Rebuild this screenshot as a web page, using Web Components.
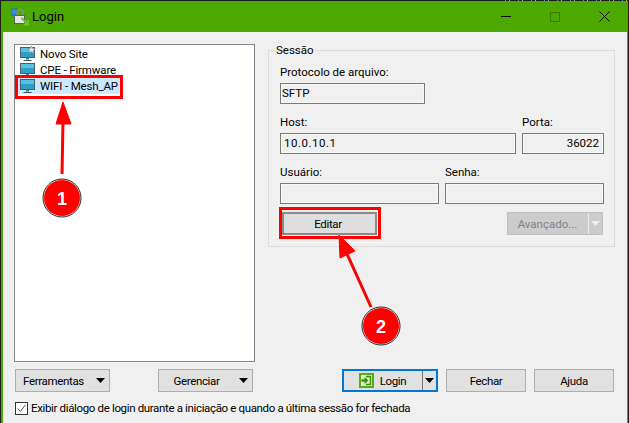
<!DOCTYPE html>
<html>
<head>
<meta charset="utf-8">
<title>Login</title>
<style>
  html, body { margin: 0; padding: 0; background: #1d1d1d; }
  body {
    width: 629px; height: 423px; overflow: hidden;
    font: 12px Roboto, sans-serif; color: #000;
    background: repeating-linear-gradient(90deg, #1d1d1d 0 5px, #4a8fd0 5px 6px, #1d1d1d 6px 9px, #c9a07a 9px 10px, #1d1d1d 10px 13px) 500px 0 / 129px 1px no-repeat #1d1d1d;
  }
</style>
</head>
<body>
<login-window>
  <session-list slot="list">
    <site-item kind="new">Novo Site</site-item>
    <site-item>CPE - Firmware</site-item>
    <site-item selected>WIFI - Mesh_AP</site-item>
  </session-list>
  <session-group slot="session"></session-group>
  <win-button slot="left" width="95" menu>Ferramentas</win-button>
  <win-button slot="left" width="95" menu>Gerenciar</win-button>
  <win-button slot="right" width="96" split primary icon>Login</win-button>
  <win-button slot="right" width="80">Fechar</win-button>
  <win-button slot="right" width="80">Ajuda</win-button>
</login-window>

<script>
const FONT = `font-family: Roboto, sans-serif; font-size: 11.5px; letter-spacing: -.35px;`;

class WinButton extends HTMLElement {
  constructor() {
    super();
    const w = this.getAttribute('width') || 80;
    const menu = this.getAttribute('menu');
    const split = this.hasAttribute('split');
    const icon = this.hasAttribute('icon');
    const arrow = `<svg class="arrow" width="9" height="5" viewBox="0 0 9 5"><path d="M0 0h9L4.5 5z" fill="currentColor"/></svg>`;
    this.attachShadow({mode: 'open'});
    this.shadowRoot.innerHTML = `
      <style>
        :host {
          display: flex;
          box-sizing: border-box;
          width: ${w}px;
          height: 23px;
          align-items: center;
          justify-content: center;
          background: #e1e1e1;
          border: 1px solid #adadad;
          color: #000;
          ${FONT}
        }
        :host([primary]) { border: 2px solid #0078d7; }
        :host([disabled]) { background: #cccccc; border-color: #bfbfbf; color: #838383; letter-spacing: 0; }
        :host([strong]) { border: 2px solid #8a8a8a; background: #dedede; padding-right: 3px; }
        .label { flex: 1; text-align: center; white-space: nowrap; }
        :host([menu]) .label { padding-right: 5px; }
        .row { display: flex; align-items: center; gap: 6px; flex: 1; justify-content: center; }
        .sep { width: 1px; align-self: stretch; background: #777; margin-left: 1px; }
        .drop { width: 13px; display: flex; justify-content: center; }
        .arrow { display: block; flex: none; }
        :host([menu]) .arrow { margin: 0 4px 0 0; }
        :host([disabled]) .drop { color: #eeeeee; }
        :host([disabled]) .sep { background: #eeeeee; }
      </style>
      ${icon ? `<div class="row">
        <svg width="15" height="15" viewBox="0 0 15 15"><rect width="15" height="15" fill="#58ad12"/><rect x="2" y="2" width="11" height="11" fill="#d8efc4"/><path d="M7 3.5h4.5v8H7" fill="none" stroke="#3c8f06" stroke-width="1.4"/><path d="M2.5 6.3h3.2V4l3.6 3.5-3.6 3.5V8.700H2.500z" fill="#3c8f06"/></svg>
        <slot></slot></div>` : `<span class="label"><slot></slot></span>`}
      ${menu !== null ? arrow : ''}
      ${split ? `<span class="sep"></span><span class="drop">${arrow}</span>` : ''}
    `;
  }
}
customElements.define('win-button', WinButton);

class SiteItem extends HTMLElement {
  constructor() {
    super();
    const star = this.getAttribute('kind') === 'new'
      ? `<path d="M11.500 0l1.200 2.400 2.600.3-1.900 1.800.5 2.600-2.400-1.300-2.400 1.300.5-2.600-1.900-1.800 2.600-.3z" fill="#e4e4e4" stroke="#8a8a8a" stroke-width=".7"/>` : '';
    this.attachShadow({mode: 'open'});
    this.shadowRoot.innerHTML = `
      <style>
        :host {
          display: flex;
          align-self: flex-start;
          align-items: center;
          gap: 4px;
          height: 16px;
          padding: 0 3px 0 4px;
          white-space: nowrap;
          ${FONT}
          letter-spacing: -.15px;
        }
        :host([selected]) { background: #cce8ff; }
        svg { display: block; flex: none; }
      </style>
      <svg width="16" height="16" viewBox="0 0 16 16">
        <rect x=".5" y="1.500" width="14" height="10" fill="#2c9fc9" stroke="#46606e"/>
        <rect x="1" y="2" width="13" height="4" fill="#55c1e3"/>
        <path d="M6 12h3v1.500H6z" fill="#5d7480"/>
        <path d="M3.500 14h8v1h-8z" fill="#39505c"/>
        ${star}
      </svg>
      <slot></slot>
    `;
  }
}
customElements.define('site-item', SiteItem);

class SessionList extends HTMLElement {
  constructor() {
    super();
    this.attachShadow({mode: 'open'});
    this.shadowRoot.innerHTML = `
      <style>
        :host {
          display: flex;
          flex-direction: column;
          box-sizing: border-box;
          width: 241px;
          height: 318px;
          padding: 1px 1px 0 1px;
          background: #fff;
          border: 1px solid #828790;
        }
      </style>
      <slot></slot>
    `;
  }
}
customElements.define('session-list', SessionList);

class FormField extends HTMLElement {
  constructor() {
    super();
    const label = this.getAttribute('label');
    const value = this.getAttribute('value') || '';
    const w = this.getAttribute('width');
    this.attachShadow({mode: 'open'});
    this.shadowRoot.innerHTML = `
      <style>
        :host { display: block; flex: none; width: ${w}px; ${FONT} letter-spacing: 0; }
        label { display: block; height: 15px; line-height: 15px; margin-bottom: 3px; }
        .box {
          box-sizing: border-box;
          height: 21px;
          line-height: 18px;
          padding: 0 1px;
          border: 1px solid #7a7a7a;
          box-shadow: inset 0 0 0 1px #f8f8f8;
          background: #f0f0f0;
        }
        :host([right]) .box { text-align: right; padding-right: 4px; }
        :host([wide]) .box { padding-left: 3px; letter-spacing: .5px; }
      </style>
      <label>${label}</label>
      <div class="box">${value}</div>
    `;
  }
}
customElements.define('form-field', FormField);

class SessionGroup extends HTMLElement {
  constructor() {
    super();
    this.attachShadow({mode: 'open'});
    this.shadowRoot.innerHTML = `
      <style>
        :host {
          display: block;
          box-sizing: border-box;
          position: relative;
          width: 347px;
          height: 197px;
          border: 1px solid #dcdcdc;
          padding: 14px 10px 0 11px;
          ${FONT}
          letter-spacing: 0;
        }
        .legend {
          position: absolute;
          left: 6px;
          top: -8px;
          padding: 0 1px;
          line-height: 15px;
          background: #f0f0f0;
        }
        .row { display: flex; gap: 6px; margin-top: 11px; }
        .row.first { margin-top: 0; }
        .actions { display: flex; justify-content: space-between; align-items: flex-start; margin-top: 8px; padding: 0 1px 0 2px; }
      </style>
      <span class="legend">Sessão</span>
      <div class="row first"><form-field label="Protocolo de arquivo:" value="SFTP" width="145"></form-field></div>
      <div class="row">
        <form-field label="Host:" value="10.0.10.1" width="236" wide></form-field>
        <form-field label="Porta:" value="36022" width="82" right></form-field>
      </div>
      <div class="row">
        <form-field label="Usuário:" width="159"></form-field>
        <form-field label="Senha:" width="159"></form-field>
      </div>
      <div class="actions">
        <win-button id="edit" width="95" strong>Editar</win-button>
        <win-button width="96" split disabled>Avançado...</win-button>
      </div>
    `;
  }
}
customElements.define('session-group', SessionGroup);

class CallOuts extends HTMLElement {
  constructor() {
    super();
    this.attachShadow({mode: 'open'});
    this.shadowRoot.innerHTML = `
      <style>
        :host { position: absolute; left: -1px; top: -1px; display: block; width: 629px; height: 423px; pointer-events: none; }
        svg { display: block; }
        text { font-family: "Liberation Sans", sans-serif; font-weight: 700; font-size: 18px; letter-spacing: 0; fill: #fff; text-anchor: middle; }
      </style>
      <svg width="629" height="423" viewBox="0 0 629 423">
        <rect x="16.500" y="76.500" width="105" height="21" fill="none" stroke="#fe0000" stroke-width="3"/>
        <rect x="280.500" y="208.500" width="99" height="29" fill="none" stroke="#fe0000" stroke-width="3"/>
        <path d="M62 174L63 122" stroke="#fe0000" stroke-width="3"/>
        <path d="M63 102L71 124H56z" fill="#fe0000" stroke="#fe0000" stroke-width="1"/>
        <circle cx="62" cy="198" r="18.500" fill="#fe0000" stroke="#fff" stroke-width="1"/>
        <circle cx="62" cy="198" r="19" fill="none" stroke="#222" stroke-width="1"/>
        <text x="62" y="205">1</text>
        <path d="M371 307L347 254" stroke="#fe0000" stroke-width="3"/>
        <path d="M339 235L355 251L340 258z" fill="#fe0000" stroke="#fe0000" stroke-width="1"/>
        <circle cx="381" cy="326" r="18.500" fill="#fe0000" stroke="#fff" stroke-width="1"/>
        <circle cx="381" cy="326" r="19" fill="none" stroke="#222" stroke-width="1"/>
        <text x="381" y="333">2</text>
      </svg>
    `;
  }
}
customElements.define('call-outs', CallOuts);

class LoginWindow extends HTMLElement {
  constructor() {
    super();
    this.attachShadow({mode: 'open'});
    this.shadowRoot.innerHTML = `
      <style>
        :host {
          display: flex;
          flex-direction: column;
          position: relative;
          box-sizing: border-box;
          width: 627px;
          height: 422px;
          margin-left: 1px;
          margin-top: 1px;
          background: #4ca900;
          ${FONT}
        }
        .title {
          display: flex;
          align-items: center;
          height: 31px;
          flex: none;
          padding: 0 1px 0 10px;
          gap: 3px;
          font-size: 13px;
          letter-spacing: 0;
        }
        .title .name { flex: 1; }
        .ctl { width: 46px; height: 31px; display: flex; align-items: center; justify-content: center; }
        .body {
          flex: 1;
          margin: 0 1px 0 2px;
          background: #f0f0f0;
          display: flex;
          flex-direction: column;
          padding: 12px 0 0 11px;
        }
        .main { display: flex; gap: 13px; }
        .left { display: flex; flex-direction: column; }
        .left-buttons { display: flex; justify-content: space-between; margin-top: 7px; padding: 0 2px 0 1px; }
        .right { display: flex; flex-direction: column; padding-top: 6px; }
        .right-buttons { display: flex; gap: 8px; margin-left: 74px; margin-top: 122px; }
        .check { display: flex; align-items: center; gap: 3px; height: 14px; margin-top: 9px; margin-left: 1px; white-space: nowrap; }
        .box { box-sizing: border-box; width: 13px; height: 13px; border: 1px solid #333; background: #fff; display: block; }
      </style>
      <div class="title">
        <svg width="18" height="18" viewBox="0 0 18 18">
          <rect x="0" y="1" width="6" height="6" fill="#2f8fe0" stroke="#1765ab" stroke-width=".8"/>
          <path d="M6 7V4.500a3 3 0 0 1 6 0V8" fill="none" stroke="#8b8b8b" stroke-width="1.500"/>
          <rect x="3.500" y="7.500" width="10" height="8" fill="#e6e6e6" stroke="#5e5e5e"/>
          <path d="M10.500 10l6.500 6.500M17 12v4.500h-4.500" fill="none" stroke="#6ebe2f" stroke-width="2"/>
        </svg>
        <span class="name">Login</span>
        <span class="ctl"><svg width="10" height="1"><rect width="10" height="1" fill="#000"/></svg></span>
        <span class="ctl"><svg width="10" height="10"><rect x=".5" y=".5" width="9" height="9" fill="none" stroke="#387b02"/></svg></span>
        <span class="ctl"><svg width="11" height="11" viewBox="0 0 11 11"><path d="M.5.500l10 10M10.500.500l-10 10" stroke="#000" fill="none"/></svg></span>
      </div>
      <div class="body">
        <div class="main">
          <div class="left">
            <slot name="list"></slot>
            <div class="left-buttons"><slot name="left"></slot></div>
          </div>
          <div class="right">
            <slot name="session"></slot>
            <div class="right-buttons"><slot name="right"></slot></div>
          </div>
        </div>
        <div class="check">
          <svg class="box" width="13" height="13" viewBox="0 0 11 11"><path d="M1.500 5.500l2.800 3L9.500 1.800" fill="none" stroke="#555" stroke-width="1"/></svg>
          <span>Exibir diálogo de login durante a iniciação e quando a última sessão for fechada</span>
        </div>
      </div>
      <call-outs></call-outs>
    `;
  }
}
customElements.define('login-window', LoginWindow);
</script>
</body>
</html>
